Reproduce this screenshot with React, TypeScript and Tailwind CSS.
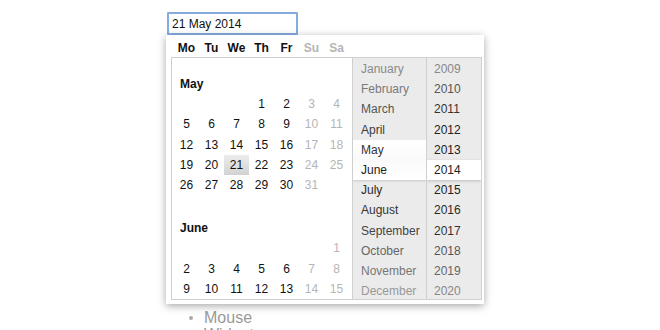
import React from 'react';

const weekdays = ['Mo', 'Tu', 'We', 'Th', 'Fr', 'Su', 'Sa'];

const months = [
  { name: 'January', color: 'text-[#8a8a8a]' },
  { name: 'February', color: 'text-[#7a7a7a]' },
  { name: 'March', color: 'text-[#555]' },
  { name: 'April', color: 'text-[#3a3a3a]' },
  { name: 'May', color: 'text-[#333]' },
  { name: 'June', color: 'text-[#222]' },
  { name: 'July', color: 'text-[#2a2a2a]' },
  { name: 'August', color: 'text-[#333]' },
  { name: 'September', color: 'text-[#444]' },
  { name: 'October', color: 'text-[#666]' },
  { name: 'November', color: 'text-[#777]' },
  { name: 'December', color: 'text-[#999]' },
];

const years = [
  { y: '2009', color: 'text-[#888]' },
  { y: '2010', color: 'text-[#555]' },
  { y: '2011', color: 'text-[#333]' },
  { y: '2012', color: 'text-[#222]' },
  { y: '2013', color: 'text-[#222]' },
  { y: '2014', color: 'text-[#222]' },
  { y: '2015', color: 'text-[#222]' },
  { y: '2016', color: 'text-[#2a2a2a]' },
  { y: '2017', color: 'text-[#333]' },
  { y: '2018', color: 'text-[#555]' },
  { y: '2019', color: 'text-[#666]' },
  { y: '2020', color: 'text-[#888]' },
];

// null = empty cell
const may: (number | null)[][] = [
  [null, null, null, 1, 2, 3, 4],
  [5, 6, 7, 8, 9, 10, 11],
  [12, 13, 14, 15, 16, 17, 18],
  [19, 20, 21, 22, 23, 24, 25],
  [26, 27, 28, 29, 30, 31, null],
];

const june: (number | null)[][] = [
  [null, null, null, null, null, null, 1],
  [2, 3, 4, 5, 6, 7, 8],
  [9, 10, 11, 12, 13, 14, 15],
];

const MonthBlock = ({ title, rows, selected }: { title: string; rows: (number | null)[][]; selected?: number }) => (
  <div>
    <div className="h-[20px] leading-[20px] pl-[6px] font-bold text-[12px] text-[#111]">{title}</div>
    {rows.map((row, r) => (
      <div key={r} className="flex h-[20.25px]">
        {row.map((d, i) => (
          <div
            key={i}
            className={
              'w-[25px] flex items-center justify-center text-[12px] ' +
              (i >= 5 ? 'text-[#b5b5b5] ' : 'text-[#111] ') +
              (d !== null && d === selected ? 'bg-gradient-to-b from-[#ececec] to-[#d2d2d2]' : '')
            }
          >
            {d}
          </div>
        ))}
      </div>
    ))}
  </div>
);

export default function App() {
  return (
    <div className="w-[660px] h-[330px] bg-white overflow-hidden" style={{ fontFamily: '"Liberation Sans", Arial, sans-serif' }}>
      <div className="pl-[167px] pt-[12px]">
        <div className="w-[131px] h-[23px] border-2 border-[#86acdf] rounded-[1px] pl-[3px] flex items-center text-[12px] text-[#111]">
          21 May 2014
        </div>
      </div>

      <div className="ml-[166px] w-[318px] h-[269px] bg-white shadow-[0_2px_8px_rgba(0,0,0,0.35)]">
        <div className="flex h-[22px] pl-[8px] pt-[3px] items-center">
          {weekdays.map((w, i) => (
            <div key={w} className={'w-[25px] text-center font-bold text-[12px] ' + (i >= 5 ? 'text-[#b5b5b5]' : 'text-[#111]')}>
              {w}
            </div>
          ))}
        </div>

        <div className="flex pl-[5px]">
          <div className="w-[182px] h-[243px] border border-[#cfcfcf] overflow-hidden pl-[2px] pt-[16px]">
            <MonthBlock title="May" rows={may} selected={21} />
            <div className="h-[23px]" />
            <MonthBlock title="June" rows={june} />
          </div>

          <div className="w-[74px] h-[243px] bg-[#ebebeb] border-t border-b border-r border-[#d0d0d0] overflow-hidden pt-[1px]">
            {months.map((m, i) => (
              <div
                key={m.name}
                className={
                  'h-[20.2px] flex items-center pl-[8px] text-[12px] ' +
                  m.color +
                  (i === 4 ? ' bg-gradient-to-b from-white to-[#fafafa]' : '') +
                  (i === 5 ? ' bg-gradient-to-b from-[#fafafa] to-white shadow-[0_1px_2px_rgba(0,0,0,0.15)]' : '')
                }
              >
                {m.name}
              </div>
            ))}
          </div>

          <div className="w-[55px] h-[243px] bg-[#ebebeb] border-t border-b border-r border-[#d0d0d0] overflow-hidden pt-[1px]">
            {years.map((y) => (
              <div
                key={y.y}
                className={
                  'h-[20.2px] flex items-center pl-[7px] text-[12px] ' +
                  y.color +
                  (y.y === '2014' ? ' bg-white shadow-[0_1px_3px_rgba(0,0,0,0.2)] relative' : '')
                }
              >
                {y.y}
              </div>
            ))}
          </div>
        </div>
      </div>

      <ul className="mt-[5px] ml-[189px] text-[16px] leading-[17px] text-[#999]">
        <li className="flex items-center">
          <span className="w-[4px] h-[4px] rounded-full bg-[#aaa] mr-[11px]" />
          Mouse
        </li>
        <li className="flex items-center">
          <span className="w-[4px] h-[4px] rounded-full bg-[#aaa] mr-[11px]" />
          Widget
        </li>
      </ul>
    </div>
  );
}
